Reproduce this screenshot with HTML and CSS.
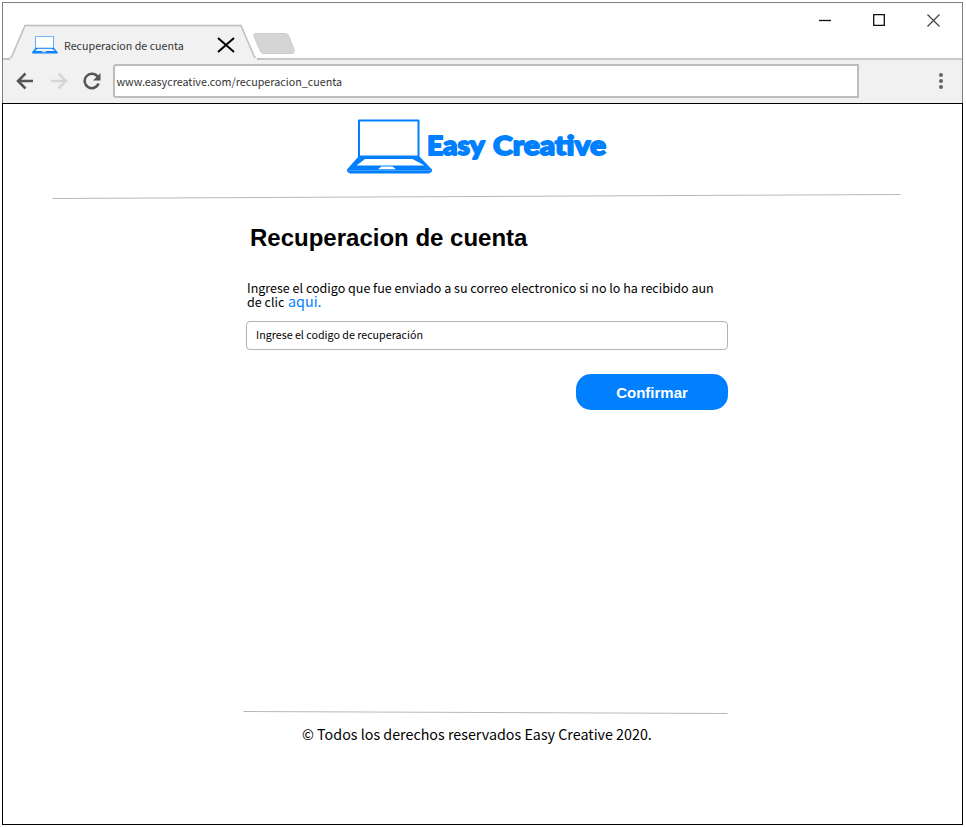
FILE: index.html
```html
<!DOCTYPE html>
<html lang="es">
<head>
<meta charset="utf-8">
<title>Recuperacion de cuenta</title>
<link rel="stylesheet" href="styles.css">
</head>
<body>
<svg width="0" height="0" class="defs">
  <symbol id="laptop" viewBox="0 0 86 56">
    <path fill="#fff" d="M13 3h58v36H13z"/>
    <path fill="#007fff" fill-rule="evenodd" d="M11 1.500q0-1 1-1h59.500q1 0 1 1v36L85 50.500v2l-3 2H3l-3-2v-2L11 38zM13 2.500v34h57.500v-34zM18 40l-8.500 6.500h68L65.500 40zM34.500 47.500l-3.500 2.800h18l-3.500-2.800z"/>
    <path stroke="#69b3ff" stroke-width=".6" d="M1 51.500h83"/>
  </symbol>
</svg>
<div class="window">
  <header class="chrome">
    <div class="strip">
      <svg class="tab-shape" width="320" height="58" viewBox="2 2 320 58">
        <path fill="#f1f1f1" stroke="#bdbdbd" stroke-width="1.500" d="M3 59h5q3 0 4-3L25 25.500h216L254 56q1 3 4 3h5"/>
        <path fill="#f1f1f1" d="M10 58h247v2H10z"/>
        <path fill="#d5d5d5" stroke="#ccc" d="M256 33.500h29q3 0 4 3l5 13q1 4-2 4h-28q-3 0-4-3l-6-14q-1-3 2-3z"/>
      </svg>
      <div class="tab">
        <svg class="favicon" viewBox="0 0 86 56" preserveAspectRatio="none"><use href="#laptop"/></svg>
        <span class="tab-title">Recuperacion de cuenta</span>
        <svg class="tab-close" width="18" height="16" viewBox="0 0 18 16"><path d="M1 1l16 14M17 1L1 15" stroke="#000" stroke-width="2"/></svg>
      </div>
      <div class="controls">
        <svg width="12" height="12" viewBox="0 0 12 12"><path d="M0 6.500h12" stroke="#111" stroke-width="1.300"/></svg>
        <svg width="12" height="12" viewBox="0 0 12 12"><path d="M.7.700h10.600v10.600H.700z" fill="none" stroke="#111" stroke-width="1.300"/></svg>
        <svg width="13" height="13" viewBox="0 0 13 13"><path d="M.5.500l12 12M12.500.500l-12 12" stroke="#444" stroke-width="1.300"/></svg>
      </div>
    </div>
    <div class="toolbar">
      <svg width="18" height="18" viewBox="0 0 18 18" class="nav"><path d="M17 9H2M9.500 1.500L2 9l7.500 7.500"/></svg>
      <svg width="18" height="18" viewBox="0 0 18 18" class="nav off"><path d="M1 9h15M8.500 1.500L16 9l-7.500 7.500"/></svg>
      <svg width="18" height="18" viewBox="0 0 18 18" class="nav"><path d="M15.600 11.500A7.200 7.200 0 1 1 14.500 4.500"/><path class="tip" d="M17.500 1v7.500H10z"/></svg>
      <div class="address">www.easycreative.com/recuperacion_cuenta</div>
      <svg width="6" height="18" viewBox="0 0 6 18" class="more"><circle cx="3" cy="3" r="2"/><circle cx="3" cy="9" r="2"/><circle cx="3" cy="15" r="2"/></svg>
    </div>
  </header>
  <main class="page">
    <div class="brand">
      <svg width="264" height="60" viewBox="0 0 264 60">
        <use href="#laptop" width="86" height="56"/>
        <text class="wordmark" y="36"><tspan x="80" textLength="57" lengthAdjust="spacingAndGlyphs">Easy</tspan> <tspan x="146" textLength="113" lengthAdjust="spacingAndGlyphs">Creative</tspan></text>
      </svg>
    </div>
    <svg class="rule-top" width="850" height="6" viewBox="0 0 850 6"><path d="M.5 4.500L848.500 .5"/></svg>
    <section class="form">
      <h1>Recuperacion de cuenta</h1>
      <p>Ingrese el codigo que fue enviado a su correo electronico si no lo ha recibido aun<br>de clic <a>aqui.</a></p>
      <div class="field">Ingrese el codigo de recuperación</div>
      <button>Confirmar</button>
    </section>
    <footer>
      <svg class="rule-bottom" width="486" height="4" viewBox="0 0 486 4"><path d="M.5 1.500L484.500 3.500"/></svg>
      <div class="copyright">© Todos los derechos reservados Easy Creative 2020.</div>
    </footer>
  </main>
</div>
</body>
</html>
```
FILE: styles.css
```css
* { box-sizing: border-box; }
body { margin: 0; background: #fff; font-family: "Noto Sans CJK SC", "Noto Sans", sans-serif; color: #000; }
.defs { display: block; height: 0; }
.window { width: 961px; margin: 2px 0 0 2px; }
.chrome { height: 101px; border: 1px solid #808080; border-bottom: 0; background: #f1f1f1; display: flex; flex-direction: column; }
.strip { position: relative; height: 57px; background: #fff; border-bottom: 2px solid #c8c8c8; display: flex; justify-content: space-between; }
.tab-shape { position: absolute; left: -1px; top: -1px; }
.tab { position: relative; display: flex; align-items: center; margin: 23px 0 0 29px; height: 38px; width: 203px; }
.favicon { width: 26px; height: 18px; }
.tab-title { margin-left: 6px; padding-top: 2px; width: 122px; font-size: 10.7px; line-height: 20px; color: #333; white-space: nowrap; }
.tab-close { margin-left: auto; }
.controls { display: flex; gap: 42px; padding: 11px 21px 0 0; margin-right: 1px; }
.toolbar { height: 42px; display: flex; align-items: center; padding: 0 18px 0 13px; }
.nav { fill: none; stroke: #555; stroke-width: 2.500; margin-right: 15.500px; }
.nav.off { stroke: #d6d6d6; }
.nav .tip { fill: #555; stroke: none; }
.address { width: 746px; height: 34px; margin-left: -4px; border: 2px solid #bdbdbd; border-radius: 3px 0 0 3px; background: #fff; padding-left: 2px; font-size: 10.75px; line-height: 31px; color: #333; }
.more { fill: #666; margin-left: auto; }
.page { width: 961px; height: 722px; border: 1px solid #000; display: flex; flex-direction: column; }
.brand { padding: 15px 0 0 344px; height: 90px; }
.wordmark { font: 900 27px Lato, sans-serif; fill: #007fff; stroke: #007fff; stroke-width: 1.800; stroke-linejoin: round; }
.rule-top { margin-left: 49px; flex: none; }
.rule-top path, .rule-bottom path { stroke: #b8b8b8; stroke-width: 1; }
.form { width: 482px; margin: 24px 0 0 243px; display: flex; flex-direction: column; }
h1 { margin: 0 0 0 4px; font: bold 24px/28px "Liberation Sans", sans-serif; }
p { margin: 29px 0 0 1px; font-size: 12.520px; line-height: 14px; white-space: nowrap; }
p a { color: #007fff; font-size: 14.300px; line-height: 10px; margin-left: 1px; }
.field { height: 29px; margin-top: 12px; border: 1px solid #b3b3b3; border-radius: 4px; padding-left: 9px; font-size: 10.700px; line-height: 26px; }
button { align-self: flex-end; width: 152px; height: 36px; margin-top: 24px; padding: 0; border: 0; border-radius: 15px; background: #007fff; color: #fff; font: bold 15px "Liberation Sans", sans-serif; }
footer { margin: auto 0 80px 240px; width: 486px; }
.rule-bottom { display: block; }
.copyright { margin: 10px 0 0 59px; font-size: 14.300px; line-height: 20px; white-space: nowrap; }
```
